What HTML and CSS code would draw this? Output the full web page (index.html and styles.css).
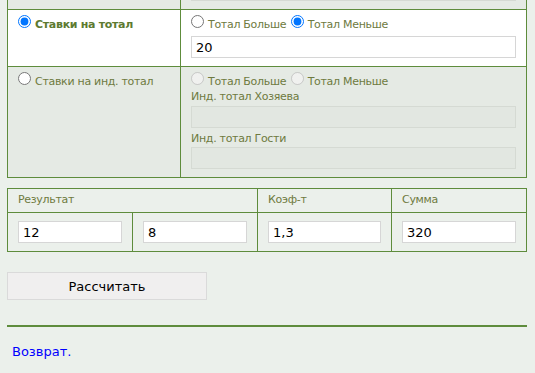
FILE: index.html
```html
<!DOCTYPE html>
<html lang="ru">
<head>
<meta charset="utf-8">
<title>Ставки</title>
<link rel="stylesheet" href="styles.css">
</head>
<body>
<div class="page">
  <div class="bets">
    <div class="cell dim"></div>
    <div class="cell dim cell-top"><input class="field" type="text" disabled></div>

    <div class="cell on">
      <div class="opts"><label class="opt strong"><input type="radio" name="kind" checked>Ставки на тотал</label></div>
    </div>
    <div class="cell on">
      <div class="opts">
        <label class="opt"><input type="radio" name="tot">Тотал Больше</label>
        <label class="opt"><input type="radio" name="tot" checked>Тотал Меньше</label>
      </div>
      <input class="field field-first" type="text" value="20">
    </div>

    <div class="cell dim">
      <div class="opts"><label class="opt"><input type="radio" name="kind">Ставки на инд. тотал</label></div>
    </div>
    <div class="cell dim">
      <div class="opts">
        <label class="opt"><input type="radio" name="ind" disabled>Тотал Больше</label>
        <label class="opt"><input type="radio" name="ind" disabled>Тотал Меньше</label>
      </div>
      <div class="cap">Инд. тотал Хозяева</div>
      <input class="field field-a" type="text" disabled>
      <div class="cap cap-b">Инд. тотал Гости</div>
      <input class="field field-b" type="text" disabled>
    </div>
  </div>

  <div class="calc">
    <div class="hcell span2">Результат</div>
    <div class="hcell">Коэф-т</div>
    <div class="hcell">Сумма</div>
    <div class="dcell"><input class="field" type="text" value="12"></div>
    <div class="dcell"><input class="field" type="text" value="8"></div>
    <div class="dcell"><input class="field" type="text" value="1,3"></div>
    <div class="dcell"><input class="field" type="text" value="320"></div>
  </div>

  <button class="btn" type="button">Рассчитать</button>

  <hr class="rule">

  <a class="back" href="#">Возврат.</a>
</div>
</body>
</html>
```

FILE: styles.css
```css
html, body {
  margin: 0;
  padding: 0;
  background: #ebf0eb;
}

body {
  font-family: "DejaVu Sans", Verdana, sans-serif;
  font-size: 11px;
  color: #6e7a40;
  overflow: hidden;
}

.page {
  width: 520px;
  padding-left: 7px;
}

.bets {
  display: grid;
  grid-template-columns: 173px 346px;
  border-left: 1px solid #5e8c3c;
  border-top: 1px solid #5e8c3c;
  margin-top: -30px;
}

.cell {
  border-right: 1px solid #5e8c3c;
  border-bottom: 1px solid #5e8c3c;
  padding: 2px 10px 8px;
  box-sizing: border-box;
}

.cell-top {
  padding-top: 8px;
}

.dim {
  background: #e5eae4;
}

.on {
  background: #ffffff;
}

.opts {
  height: 20px;
  line-height: 16px;
  white-space: nowrap;
}

.opt {
  margin-right: 1px;
  letter-spacing: -0.3px;
}

.opt input {
  margin: 3px 4px 0 0;
  vertical-align: baseline;
}

.strong {
  font-weight: bold;
  color: #5d7a30;
}

.cap {
  line-height: 16px;
  letter-spacing: -0.3px;
}

.cap-b {
  margin-top: 3px;
}

.field {
  display: block;
  box-sizing: border-box;
  width: 100%;
  height: 22px;
  margin: 0;
  padding: 0 4px;
  border: 1px solid #d6d6d6;
  background: #ffffff;
  font-family: "DejaVu Sans", Verdana, sans-serif;
  font-size: 13px;
  color: #000000;
  outline: none;
}

.field:disabled {
  background: #e2e7e1;
  border-color: #d5dad3;
}

.field-first {
  margin-top: 4px;
}

.field-a {
  margin-top: 1px;
}

.calc {
  display: grid;
  grid-template-columns: 125px 125px 134px 135px;
  border-left: 1px solid #5e8c3c;
  border-top: 1px solid #5e8c3c;
  margin-top: 10px;
}

.hcell,
.dcell {
  border-right: 1px solid #5e8c3c;
  border-bottom: 1px solid #5e8c3c;
}

.hcell {
  padding: 3px 10px 4px;
  line-height: 16px;
  letter-spacing: -0.3px;
}

.span2 {
  grid-column: span 2;
}

.dcell {
  padding: 8px 10px;
}

.btn {
  display: block;
  margin-top: 20px;
  width: 200px;
  height: 28px;
  padding: 0;
  border: 1px solid #dadada;
  background: #f0efef;
  font-family: "DejaVu Sans", Verdana, sans-serif;
  font-size: 13px;
  color: #000000;
}

.rule {
  margin: 25px 0 0;
  height: 2px;
  border: 0;
  background: #5e8c3c;
}

.back {
  display: inline-block;
  margin: 17px 0 0 5px;
  font-size: 13px;
  line-height: 16px;
  color: #0000ff;
  text-decoration: none;
}
```
